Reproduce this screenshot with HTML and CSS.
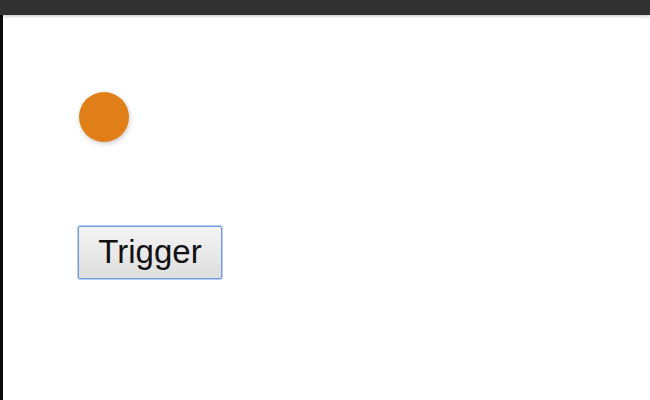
FILE: index.html
```html
<!DOCTYPE html>
<html>
<head>
<meta charset="utf-8">
<link rel="stylesheet" href="styles.css">
</head>
<body>
<div class="topbar"></div>
<div class="main">
  <div class="dot"></div>
  <button class="trigger">Trigger</button>
</div>
</body>
</html>
```
FILE: styles.css
```css
html, body {
  margin: 0;
  padding: 0;
  height: 100%;
  background: #fff;
  overflow: hidden;
}
.topbar {
  height: 15px;
  background: #323232;
  box-shadow: 0 1px 3px rgba(0,0,0,0.25);
  position: relative;
  z-index: 1;
}
.main {
  height: 385px;
  border-left: 3px solid #0a0a0a;
  box-sizing: border-box;
  display: flex;
  flex-direction: column;
  align-items: flex-start;
  padding-left: 75px;
}
.dot {
  width: 50px;
  height: 50px;
  border-radius: 50%;
  background: #e07e17;
  margin-top: 77px;
  margin-left: 1px;
  box-shadow: 1px 2px 5px rgba(0,0,0,0.2);
}
.trigger {
  margin-top: 84px;
  width: 144px;
  height: 53px;
  padding: 0 0 2px 0;
  font-family: "Liberation Sans", Arial, sans-serif;
  font-size: 33px;
  color: #111;
  background: linear-gradient(#f4f4f4, #dedede);
  border: 1px solid #6f9be0;
  border-radius: 2px;
  box-shadow: 0 0 0 1px #b9cff2;
}
```
